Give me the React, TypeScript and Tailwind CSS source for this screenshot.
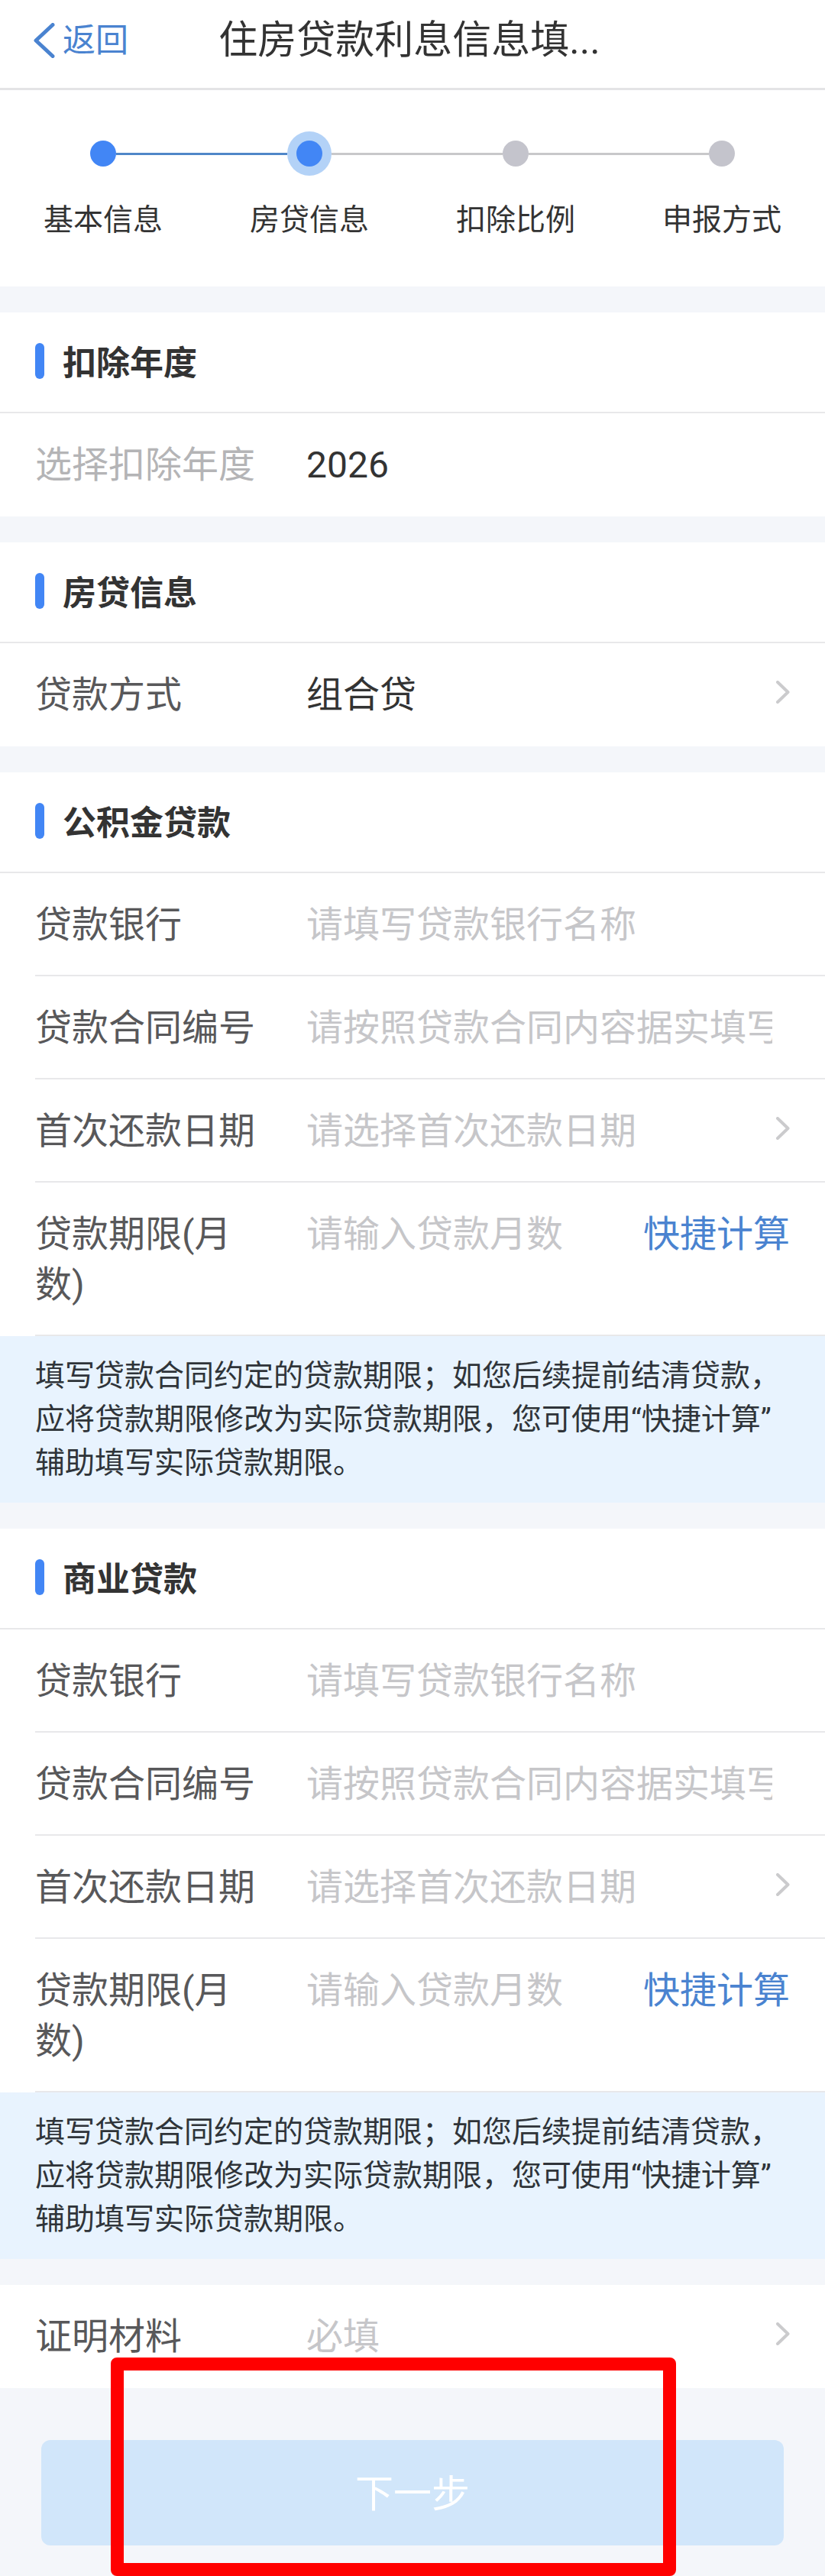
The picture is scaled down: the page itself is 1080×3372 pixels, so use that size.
import { useId, type ReactNode } from "react";

type StepState = "done" | "current" | "todo";

const steps: { label: string; state: StepState }[] = [
  { label: "基本信息", state: "done" },
  { label: "房贷信息", state: "current" },
  { label: "扣除比例", state: "todo" },
  { label: "申报方式", state: "todo" },
];

function Chevron() {
  return (
    <svg viewBox="0 0 18 30" className="mb-2 h-[30px] w-[18px]" fill="none" stroke="#cbcbcd" strokeWidth="4" aria-hidden="true">
      <path d="M2 2 15.5 15 2 28" strokeLinecap="round" strokeLinejoin="round" />
    </svg>
  );
}

function Stepper() {
  return (
    <ol className="grid grid-cols-4 bg-white pt-[54px] pb-[59px]">
      {steps.map((step, i) => {
        const reached = step.state !== "todo";
        const next = steps[i + 1];
        const nextReached = next !== undefined && next.state !== "todo";
        return (
          <li key={step.label} className="flex flex-col items-center gap-[30px]">
            <div className="flex h-[58px] w-full items-center">
              <span className={`h-[3px] flex-1 ${i === 0 ? "" : reached ? "bg-[#4f86c8]" : "bg-[#c8c8ca]"}`} />
              {step.state === "current" ? (
                <span className="flex size-[58px] items-center justify-center rounded-full bg-[#b3d2f7]">
                  <span className="size-[34px] rounded-full bg-[#4286f5]" />
                </span>
              ) : (
                <span className={`size-[34px] rounded-full ${reached ? "bg-[#4286f5]" : "bg-[#c4c4cc]"}`} />
              )}
              <span className={`h-[3px] flex-1 ${!next ? "" : nextReached ? "bg-[#4f86c8]" : "bg-[#c8c8ca]"}`} />
            </div>
            <span className="text-[39px] leading-[56px]">{step.label}</span>
          </li>
        );
      })}
    </ol>
  );
}

function Section({ title, children }: { title?: string; children: ReactNode }) {
  return (
    <section className="mt-[34px] bg-white">
      {title && (
        <div className="flex h-[132px] items-center gap-6 border-b-2 border-[#e8e8ea] px-[46px] pt-1">
          <span className="mb-2 h-[47px] w-3 rounded-full bg-[#4286f5]" />
          <h2 className="text-[44px] leading-[66px] font-bold">{title}</h2>
        </div>
      )}
      {children}
    </section>
  );
}

type RowProps = {
  label: string;
  kind: "input" | "picker" | "readonly";
  value?: string;
  placeholder?: string;
  action?: string;
  divider?: boolean;
};

function Row({ label, kind, value, placeholder, action, divider = false }: RowProps) {
  const id = useId();
  return (
    <div
      className={`ml-[46px] flex items-start border-b-2 pt-[35px] pr-[46px] pb-8 text-[48px] leading-[66px] ${
        divider ? "border-[#e8e8ea]" : "border-white"
      }`}
    >
      <label htmlFor={id} className={`mr-[59px] w-[296px] shrink-0 ${kind === "readonly" ? "text-[#b4b4b6]" : "text-[#58585a]"}`}>
        {label}
      </label>
      {kind === "picker" ? (
        <button id={id} type="button" className="flex min-w-0 flex-1 items-center justify-between text-left">
          <span className={value ? "" : "text-[#c6c6c9]"}>{value ?? placeholder}</span>
          <Chevron />
        </button>
      ) : (
        <input
          id={id}
          type="text"
          readOnly={kind === "readonly"}
          defaultValue={value}
          placeholder={placeholder}
          className="mr-[23px] h-[66px] min-w-0 flex-1 bg-transparent outline-none placeholder:text-[#c6c6c9]"
        />
      )}
      {action && (
        <button type="button" className="shrink-0 text-[#4a83d0]">
          {action}
        </button>
      )}
    </div>
  );
}

function LoanSection({ title }: { title: string }) {
  return (
    <Section title={title}>
      <Row label="贷款银行" kind="input" placeholder="请填写贷款银行名称" divider />
      <Row label="贷款合同编号" kind="input" placeholder="请按照贷款合同内容据实填写" divider />
      <Row label="首次还款日期" kind="picker" placeholder="请选择首次还款日期" divider />
      <Row label="贷款期限(月数)" kind="input" placeholder="请输入贷款月数" action="快捷计算" divider />
      <p className="bg-[#e8f3fe] px-[46px] pt-6 pb-[23px] text-[39px] leading-[57px] text-[#2f3439]">
        填写贷款合同约定的贷款期限；如您后续提前结清贷款，应将贷款期限修改为实际贷款期限，您可使用“快捷计算”辅助填写实际贷款期限。
      </p>
    </Section>
  );
}

export default function App() {
  return (
    <div lang="zh-CN" className="min-h-screen bg-[#f4f6fa] font-[Roboto,'Noto_Sans_CJK_SC',sans-serif] text-[#333333]">
      <header className="grid grid-cols-[1fr_auto_1fr] items-center border-b-3 border-[#e4e4e6] bg-white pt-5 pr-[52px] pb-[29px] pl-11">
        <a href="#back" className="flex items-center gap-2.5 text-[43px] leading-[66px] text-[#4a83d0]">
          <svg viewBox="0 0 28 46" className="h-[46px] w-7" fill="none" stroke="currentColor" strokeWidth="5" aria-hidden="true">
            <path d="M25 2.5 3 23 25 43.5" strokeLinecap="round" strokeLinejoin="round" />
          </svg>
          返回
        </a>
        <h1 className="text-[51px] leading-[66px]">住房贷款利息信息填...</h1>
      </header>

      <Stepper />

      <main>
        <Section title="扣除年度">
          <Row label="选择扣除年度" kind="readonly" value="2026" />
        </Section>
        <Section title="房贷信息">
          <Row label="贷款方式" kind="picker" value="组合贷" />
        </Section>
        <LoanSection title="公积金贷款" />
        <LoanSection title="商业贷款" />
        <Section>
          <Row label="证明材料" kind="picker" placeholder="必填" />
        </Section>
      </main>

      <footer className="relative px-[54px] pt-[68px] pb-10">
        <button type="button" disabled className="h-[138px] w-full rounded-xl bg-[#d1e6fa] pt-1 text-[50px] text-white">
          下一步
        </button>
        <div className="pointer-events-none absolute -top-10 right-[195px] bottom-0 left-[145px] rounded-lg border-[17px] border-[#ff0000]" />
      </footer>
    </div>
  );
}
